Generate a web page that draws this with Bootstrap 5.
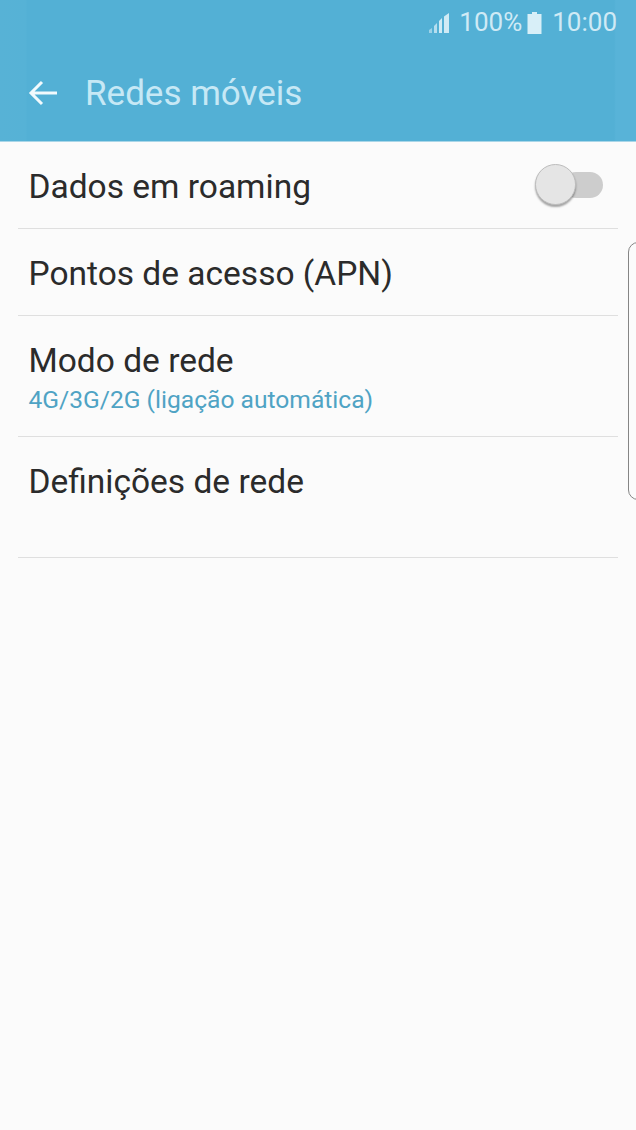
<!DOCTYPE html>
<html lang="pt">
<head>
<meta charset="utf-8">
<title>Redes móveis</title>
<link href="https://cdn.jsdelivr.net/npm/bootstrap@5.3.0/dist/css/bootstrap.min.css" rel="stylesheet">
<style>
html,body{margin:0;height:1130px;overflow:hidden;}
body{background:#fbfbfb;font-family:Roboto,"Liberation Sans",sans-serif;color:#2b2b2b;position:relative;}
.app-head{height:142px;background:linear-gradient(90deg,#57b2d6 0,#56b2d6 26px,#53b0d5 27px,#53b0d5 614px,#58b3d8 616px);border-bottom:1px solid #a9d6e8;}
.status-row{height:45px;padding-right:19px;color:#cfeaf5;font-size:26px;line-height:45px;gap:5px;}
.signal-icon{margin-right:3px;}
.title-row{height:96px;padding-left:28px;}
.page-title{font-size:35px;color:#c6e8f5;margin:0 0 0 27px;font-weight:400;line-height:1;}
.set-list{margin:0 18px;padding:0;list-style:none;}
.set-item{border-bottom:1px solid #dfdfdf;padding-left:10.5px;}
.h-87{height:87px;padding-top:4px;}
.h-121{height:121px;}
.set-main{font-size:33.5px;line-height:1;}
.set-sub{font-size:24.6px;line-height:1;color:#4fa3c4;margin-top:10px;}
.pt-tall{padding-top:28px;}
.switch-box{position:relative;width:68px;height:42px;margin-right:15px;margin-top:-4px;}
.switch-track{position:absolute;right:0;top:8px;width:40px;height:26px;border-radius:13px;background:#cdcdcd;}
.switch-thumb{position:absolute;left:0;top:0;width:41px;height:41px;border-radius:50%;background:#e5e5e5;border:1px solid #bdbdbd;box-shadow:0 2px 2px rgba(0,0,0,.35);}
.edge-handle{position:absolute;right:-12px;top:242px;width:20px;height:258px;border:1px solid #858585;border-radius:14px;}
</style>
</head>
<body>
<header class="app-head">
<div class="status-row d-flex justify-content-end align-items-center">
<svg class="signal-icon" width="23" height="22" viewBox="0 0 23 22" aria-hidden="true"><path d="M1 21v-3l3-2v5z" fill="#cfeaf5" opacity=".6"/><path d="M6 21v-7l3-3v10z" fill="#cfeaf5" opacity=".8"/><path d="M11 21V9l3-3v15z" fill="#cfeaf5"/><path d="M16 21V4.500L21 1v20z" fill="#cfeaf5"/></svg>
<span>100%</span>
<svg width="16" height="22" viewBox="0 0 16 22" aria-hidden="true"><path d="M5 0h5v2h4.500v20H.5V2H5z" fill="#d8eff8"/></svg>
<span class="ms-1">10:00</span>
</div>
<div class="title-row d-flex align-items-center">
<svg width="30" height="26" viewBox="0 0 30 26" aria-hidden="true"><path d="M29 13H3M14 2 3 13l11 11" fill="none" stroke="#f2fafd" stroke-width="3"/></svg>
<h1 class="page-title">Redes móveis</h1>
</div>
</header>
<ul class="set-list">
<li class="set-item h-87 d-flex justify-content-between align-items-center">
<span class="set-main">Dados em roaming</span>
<span class="switch-box" role="presentation"><span class="switch-track"></span><span class="switch-thumb"></span></span>
</li>
<li class="set-item h-87 d-flex align-items-center"><span class="set-main">Pontos de acesso (APN)</span></li>
<li class="set-item h-121 pt-tall">
<div class="set-main">Modo de rede</div>
<div class="set-sub">4G/3G/2G (ligação automática)</div>
</li>
<li class="set-item h-121 pt-tall"><div class="set-main">Definições de rede</div></li>
</ul>
<div class="edge-handle"></div>
<script src="https://cdn.jsdelivr.net/npm/bootstrap@5.3.0/dist/js/bootstrap.bundle.min.js"></script>
</body>
</html>
